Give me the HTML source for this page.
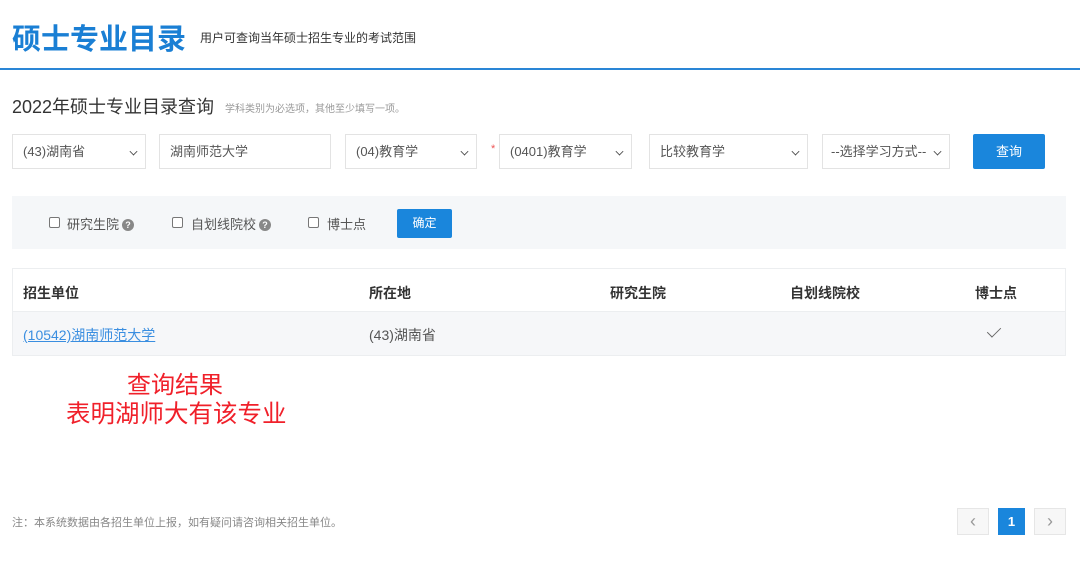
<!DOCTYPE html>
<html><head><meta charset="utf-8"><style>
*{margin:0;padding:0;box-sizing:border-box}
body{width:1080px;height:563px;background:#fff;font-family:"Liberation Sans","Noto Sans CJK SC",sans-serif;position:relative;overflow:hidden;color:#333}
.a{position:absolute;white-space:nowrap}
.box{position:absolute;top:134px;height:35px;border:1px solid #e3e3e3;background:#fff;font-size:13px;color:#555;line-height:33px;padding-left:10px}
.chev{position:absolute;right:8px;top:13px;width:7px;height:7px;border-right:1.5px solid #444;border-bottom:1.5px solid #444;transform:rotate(45deg) scale(.8)}
.cb{position:absolute;top:217px;width:11px;height:11px;border:1px solid #777;border-radius:2px;background:#fff}
.q{display:inline-block;width:12px;height:12px;border-radius:50%;background:#888;color:#fff;font-size:9px;line-height:12px;text-align:center;font-weight:bold;vertical-align:1px;margin-left:3px}
.th{position:absolute;top:283px;font-size:14px;font-weight:bold;color:#333}
</style></head><body>
<div class="a" style="left:12px;top:16px;font-size:29px;font-weight:bold;color:#1a7fd4">硕士专业目录</div>
<div class="a" style="left:200px;top:29px;font-size:12px;color:#333">用户可查询当年硕士招生专业的考试范围</div>
<div class="a" style="left:0;top:68px;width:1080px;height:2px;background:#2a86d6"></div>
<div class="a" style="left:12px;top:93px;font-size:18px;color:#333">2022年硕士专业目录查询</div>
<div class="a" style="left:225px;top:100px;font-size:10px;color:#999">学科类别为必选项，其他至少填写一项。</div>

<div class="box" style="left:12px;width:134px">(43)湖南省<span class="chev"></span></div>
<div class="box" style="left:159px;width:172px">湖南师范大学</div>
<div class="box" style="left:345px;width:132px">(04)教育学<span class="chev"></span></div>
<div class="a" style="left:491px;top:143px;color:#e55;font-size:11px">*</div>
<div class="box" style="left:499px;width:133px">(0401)教育学<span class="chev"></span></div>
<div class="box" style="left:649px;width:159px">比较教育学<span class="chev"></span></div>
<div class="box" style="left:822px;width:128px;padding-left:8px">--选择学习方式--<span class="chev"></span></div>
<div class="a" style="left:973px;top:134px;width:72px;height:35px;background:#1a86dc;border-radius:2px;color:#fff;font-size:13px;text-align:center;line-height:35px">查询</div>

<div class="a" style="left:12px;top:196px;width:1054px;height:53px;background:#f5f7f9"></div>
<div class="cb" style="left:49px"></div>
<div class="a" style="left:67px;top:214px;font-size:13px;color:#555">研究生院<span class="q">?</span></div>
<div class="cb" style="left:172px"></div>
<div class="a" style="left:191px;top:214px;font-size:13px;color:#555">自划线院校<span class="q">?</span></div>
<div class="cb" style="left:308px"></div>
<div class="a" style="left:327px;top:214px;font-size:13px;color:#555">博士点</div>
<div class="a" style="left:397px;top:209px;width:55px;height:29px;background:#1a86dc;border-radius:2px;color:#fff;font-size:12px;text-align:center;line-height:29px">确定</div>

<div class="a" style="left:12px;top:268px;width:1054px;height:88px;border:1px solid #eceef0"></div>
<div class="a" style="left:13px;top:311px;width:1052px;height:44px;background:#f6f7f9;border-top:1px solid #eceef0"></div>
<div class="th" style="left:23px">招生单位</div>
<div class="th" style="left:369px">所在地</div>
<div class="th" style="left:610px">研究生院</div>
<div class="th" style="left:790px">自划线院校</div>
<div class="th" style="left:975px">博士点</div>
<div class="a" style="left:23px;top:325px;font-size:14px;color:#3a8ee0;text-decoration:underline">(10542)湖南师范大学</div>
<div class="a" style="left:369px;top:325px;font-size:14px;color:#555">(43)湖南省</div>
<div class="a" style="left:990px;top:324px;width:8px;height:13px;border-right:1.5px solid #666;border-bottom:1.5px solid #666;transform:rotate(45deg) scaleX(.9)"></div>

<div class="a" style="left:127px;top:365px;font-size:24px;color:#f0202a">查询结果</div>
<div class="a" style="left:66px;top:395px;font-size:24.5px;color:#f0202a">表明湖师大有该专业</div>

<div class="a" style="left:12px;top:514px;font-size:11px;color:#888">注：本系统数据由各招生单位上报，如有疑问请咨询相关招生单位。</div>
<div class="a" style="left:957px;top:508px;width:32px;height:27px;border:1px solid #e6e6e6;background:#f7f7f7;color:#999;text-align:center;line-height:24px;font-size:18px">&lsaquo;</div>
<div class="a" style="left:998px;top:508px;width:27px;height:27px;background:#1a86dc;color:#fff;text-align:center;line-height:27px;font-size:13px;font-weight:bold">1</div>
<div class="a" style="left:1034px;top:508px;width:32px;height:27px;border:1px solid #e6e6e6;background:#f7f7f7;color:#999;text-align:center;line-height:24px;font-size:18px">&rsaquo;</div>
</body></html>
